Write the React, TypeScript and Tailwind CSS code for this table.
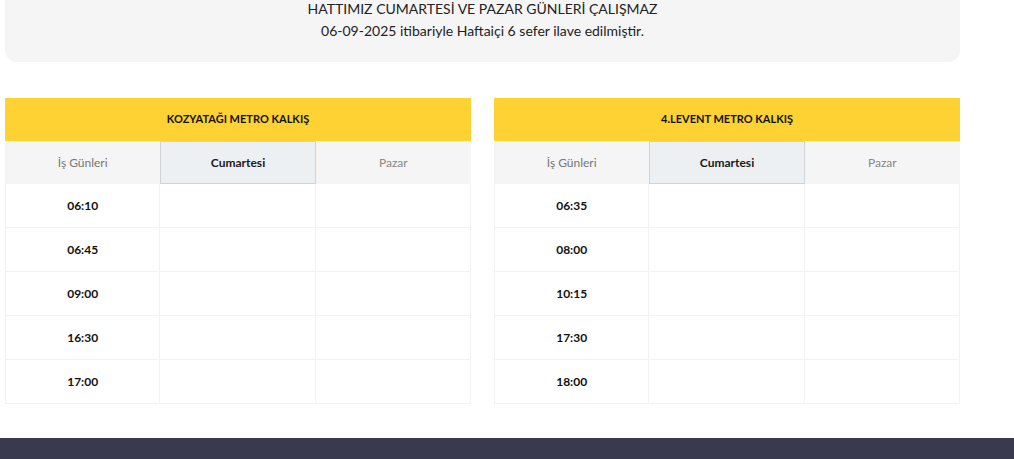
const schedules = [
  {
    title: 'KOZYATAĞI METRO KALKIŞ',
    times: ['06:10', '06:45', '09:00', '16:30', '17:00'],
  },
  {
    title: '4.LEVENT METRO KALKIŞ',
    times: ['06:35', '08:00', '10:15', '17:30', '18:00'],
  },
];

function ScheduleTable({ title, times }: { title: string; times: string[] }) {
  return (
    <div className="w-[466px]">
      <div className="h-[43px] bg-[#fdd232] flex items-center justify-center text-[11px] font-bold text-[#111]">
        {title}
      </div>
      <div className="grid grid-cols-3 h-[43px] bg-[#f5f5f5] text-[12px]">
        <div className="flex items-center justify-center text-[#777]">İş Günleri</div>
        <div className="flex items-center justify-center bg-[#edf0f3] border border-[#cfd2d6] font-bold text-[#1a1a1a]">
          Cumartesi
        </div>
        <div className="flex items-center justify-center text-[#888]">Pazar</div>
      </div>
      {times.map((t) => (
        <div key={t} className="grid grid-cols-3 h-[44px] border-b border-[#f2f2f2]">
          <div className="flex items-center justify-center text-[12px] font-bold text-[#111] border-l border-r border-[#f2f2f2]">
            {t}
          </div>
          <div className="border-r border-[#f2f2f2]" />
          <div className="border-r border-[#f2f2f2]" />
        </div>
      ))}
    </div>
  );
}

export default function App() {
  return (
    <div className="w-[1014px] h-[459px] bg-white flex flex-col overflow-hidden" style={{ fontFamily: 'Lato, "Noto Sans", sans-serif' }}>
      <div className="ml-[5px] w-[955px] h-[65px] -mt-[3px] bg-[#f5f5f5] rounded-b-[12px] flex flex-col items-center text-[#222] text-[14px] leading-[22px] pt-[1px]">
        <div>HATTIMIZ CUMARTESİ VE PAZAR GÜNLERİ ÇALIŞMAZ</div>
        <div>06-09-2025 itibariyle Haftaiçi 6 sefer ilave edilmiştir.</div>
      </div>
      <div className="flex gap-[23px] ml-[5px] mt-[36px]">
        {schedules.map((s) => (
          <ScheduleTable key={s.title} title={s.title} times={s.times} />
        ))}
      </div>
      <div className="mt-auto h-[21px] bg-[#3a3a4e]" />
    </div>
  );
}
